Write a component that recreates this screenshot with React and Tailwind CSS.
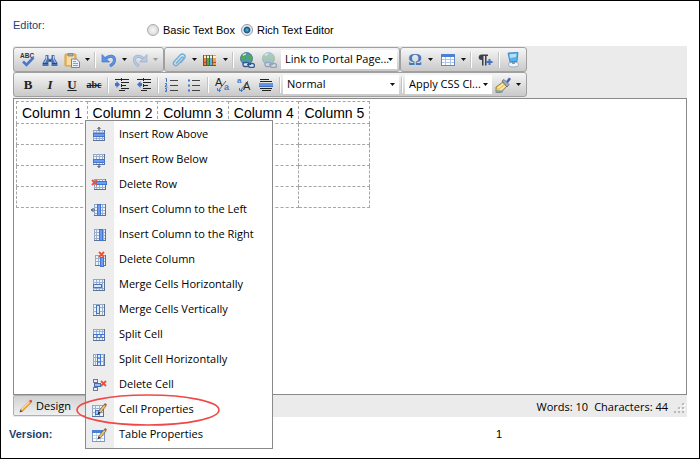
import React from "react";

const CELLS = ["Column 1", "Column 2", "Column 3", "Column 4", "Column 5"];

function Svg({ children, className = "" }) {
  return (
    <svg viewBox="0 0 16 16" className={"h-4 w-4 shrink-0 " + className} aria-hidden="true">
      {children}
    </svg>
  );
}

/* ---------- toolbar icons ---------- */

const SpellIcon = () => (
  <Svg className="overflow-visible">
    <text x="0" y="5.500" fontSize="6.500" fontWeight="bold" fontFamily="Liberation Sans, sans-serif" fill="#333">ABC</text>
    <path d="M3 9.500 6.500 13 13.500 5.500" fill="none" stroke="#4a76d0" strokeWidth="2.600" />
  </Svg>
);

const FindIcon = () => (
  <Svg>
    <path d="M3.500 3h3v3l1 1h1l1-1V3h3v3l3 5v3H9.500v-4h-3v4H.5v-3l3-5z" fill="#4a72b4" />
    <path d="M4.500 4v3l-2 4M11.500 4v3l2 4" fill="none" stroke="#b8cff0" strokeWidth="1" />
    <path d="M1 11.500h5M10 11.500h5M7 8.500h2" stroke="#26498a" />
  </Svg>
);

const PasteIcon = () => (
  <Svg>
    <rect x="1" y="2" width="11" height="12" rx="1" fill="#eebd62" stroke="#cf9c48" />
    <rect x="3" y="4" width="7" height="9" fill="#f9dd9d" />
    <path d="M4 1.500h5v2.500H4z" fill="#a4a9b3" stroke="#737a88" strokeWidth=".7" />
    <path d="M7.500 7h5l3 3v5.500h-8z" fill="#e9f0fb" stroke="#5f7aa5" strokeWidth=".9" />
    <path d="M9 9.500h3M9 11.500h5M9 13.500h5" stroke="#7da0d4" />
  </Svg>
);

const Undo = ({ color, dark }) => (
  <>
    <path d="M4.500 6.500C9 2.500 13.500 4 13.500 8c0 2.500-2 4.500-4.500 6" fill="none" stroke={dark} strokeWidth="3" />
    <path d="M4.500 6.500C9 2.500 13.500 4 13.500 8c0 2.500-2 4.500-4.500 6" fill="none" stroke={color} strokeWidth="1.800" />
    <path d="M1 2.500v7.500h7.500z" fill={color} stroke={dark} strokeWidth=".7" />
  </>
);

const UndoIcon = () => <Svg><Undo color="#5b93e4" dark="#4576c6" /></Svg>;
const RedoIcon = () => (
  <Svg><g transform="translate(16 0) scale(-1 1)"><Undo color="#b5c9e4" dark="#98aecd" /></g></Svg>
);

const ClipIcon = () => (
  <Svg>
    <path d="M5 11.500 10.500 5.500c1.200-1.300 2.800.2 1.700 1.500L6.500 13c-2 2-5.500-.8-3.500-3.200L9.200 3c2.600-2.600 6.400.6 4.300 3.300L9.500 11" fill="none" stroke="#6fb1dc" strokeWidth="1.400" />
  </Svg>
);

const LibraryIcon = () => (
  <Svg>
    <g shapeRendering="crispEdges">
      <rect x="1" y="3" width="13" height="11" fill="#6a5640" />
      <rect x="2" y="3" width="2" height="10" fill="#e8842c" />
      <rect x="5" y="3" width="2" height="10" fill="#58a845" />
      <rect x="8" y="3" width="2" height="10" fill="#5fb2e4" />
      <rect x="11" y="3" width="3" height="10" fill="#efa632" />
      <path d="M2 5h2M5 5h2M8 5h2M11 5h3" stroke="#fff2bb" strokeWidth="2" />
      <path d="M2 10.500h2M11 10.500h3" stroke="#c0452a" />
    </g>
  </Svg>
);

const GlobeLinkIcon = ({ faded = false }) => (
  <Svg className={faded ? "opacity-40" : ""}>
    <circle cx="7.500" cy="6.500" r="6" fill="#4b97c2" stroke="#376a86" strokeWidth=".8" />
    <path d="M3 3c2-2.500 5-2 5-1L6.500 4 8 6 5 9 2 7zM9.500 4 12 2.500l1.500 4L11 9 9 7z" fill="#52a853" />
    <path d="M4 3.500c1-1.500 3-1.500 3-1.500" stroke="#d4f3df" strokeWidth="1.400" fill="none" />
    <rect x="4" y="10.500" width="6" height="4" rx="2" fill="#dce7f7" stroke="#35598f" strokeWidth="1.300" />
    <rect x="9.500" y="11.500" width="6" height="4" rx="2" fill="#dce7f7" stroke="#35598f" strokeWidth="1.300" />
    <path d="M8 12.500h4" stroke="#35598f" strokeWidth="1.200" />
  </Svg>
);

const OmegaIcon = () => (
  <span className="font-['Liberation_Serif',serif] text-[17px] leading-4 font-bold text-[#4a74b8]">Ω</span>
);

const TableIcon = () => (
  <Svg>
    <rect x="1.500" y="2.500" width="13" height="11" fill="#fff" stroke="#6288c4" />
    <rect x="1" y="2" width="14" height="3" fill="#4a80d6" />
    <path d="M2 7.500h12M2 10.500h12M5.500 5v8M10.500 5v8" stroke="#adc6ea" />
  </Svg>
);

const ParagraphIcon = () => (
  <Svg>
    <path d="M7 2.500H4.500C1 2.500.5 8 4.500 8H5v5.500h1.500V4H8v9.500h1.500V4H11V2.500z" fill="#3c4048" />
    <path d="M12.500 7v6M9.500 10h6" stroke="#3e70cc" strokeWidth="2" />
  </Svg>
);

const ModuleIcon = () => (
  <Svg>
    <ellipse cx="8.500" cy="12.500" rx="5" ry="2.500" fill="#f1f4f8" stroke="#9fabbb" />
    <path d="M7 9h3v3H7z" fill="#8d9fb5" />
    <path d="m3 1 10-.5-1 9-7 .5z" fill="#54b3ee" stroke="#2d7bb9" strokeWidth=".8" />
    <path d="m4.500 2.200 7-.4-.5 3.200-6 1z" fill="#b4e2fb" />
  </Svg>
);

const Letter = ({ children, className = "" }) => (
  <span className={"font-['Liberation_Serif',serif] leading-4 font-bold text-[#222] " + className}>{children}</span>
);

const DentIcon = ({ out = false }) => (
  <Svg>
    <path d="M1 2.500h14M7 5.500h8M7 8.500h5M7 11.500h8M5 13.500h6" stroke="#222" />
    <path d={out ? "M1 7.500 4.500 4v2H6v3H4.500v2z" : "M6 7.500 2.500 4v2H1v3h1.500v2z"} fill="#3f73cf" />
    <path d="M7.500 1v14" stroke="#222" strokeDasharray="1 1" />
  </Svg>
);

const OrderedIcon = () => (
  <Svg>
    <path d="M6 3.500h8M6 8.500h8M6 13.500h8" stroke="#444" />
    <path d="M1.500 1.500h1V5M1 6.500h1.500v2H1.500v1.500H3.500M1 11.500h1.500v2H1.500M2.500 13v1.500H1" fill="none" stroke="#3f73cf" />
  </Svg>
);

const BulletIcon = () => (
  <Svg>
    <path d="M6 3.500h8M6 8.500h8M6 13.500h8" stroke="#444" />
    <path d="M2 3.500h2M2 8.500h2M2 13.500h2" stroke="#3f73cf" strokeWidth="2" />
  </Svg>
);

const CaseIcon = ({ up = false }) => (
  <Svg>
    <text x={up ? 1 : 1} y={up ? 6 : 9} fontSize={up ? 8 : 11} fontFamily="Liberation Sans, sans-serif" fontWeight={up ? "bold" : "normal"} fill={up ? "#4778cf" : "#222"}>{up ? "a" : "A"}</text>
    <text x={up ? 7 : 10} y="13" fontSize={up ? 11 : 9} fontFamily="Liberation Sans, sans-serif" fontWeight={up ? "normal" : "bold"} fill={up ? "#222" : "#4778cf"}>{up ? "A" : "a"}</text>
    <path d="M5 13 12 4" stroke="#555" strokeWidth=".9" />
    <path d="M3.500 11v2.500h3M5 12l1.500 1.500L5 15" fill="none" stroke="#4778cf" />
  </Svg>
);

const RuleIcon = () => (
  <Svg>
    <path d="M2 2.500h9M2 4.500h12M2 11.500h12M4 13.500h9" stroke="#222" />
    <rect x="1" y="6" width="14" height="4" fill="#6294e4" />
    <path d="M1 9.500h14" stroke="#3f6fc4" />
  </Svg>
);

const BrushIcon = () => (
  <Svg>
    <path d="m1 10 7-5 4 4-6 6.500H1z" fill="#f0c95c" stroke="#82713f" strokeWidth=".8" />
    <path d="m3 11 5-4M5 13l5-4" stroke="#fff1b5" strokeWidth="1.300" />
    <path d="M1 14.500h7" stroke="#6f9fd4" strokeWidth="2" />
    <path d="m7 4 2-1.500 5 5L12 10z" fill="#a5adba" stroke="#5b6472" strokeWidth=".8" />
    <path d="m11 4.500 3-4 2 1.500-3 4z" fill="#4361be" />
  </Svg>
);

const PencilIcon = () => (
  <Svg>
    <path d="m2.500 11.500 8.500-8.500 2 2-8.500 8.500z" fill="#f0a83c" stroke="#d08a35" strokeWidth=".6" />
    <path d="m3.500 11.500 8-8" stroke="#ffe29a" strokeWidth="1.100" />
    <path d="m11 3 1-1c1-.8 2.800 1 2 2l-1 1z" fill="#d25356" />
    <path d="m2.500 11.500 2 2L1.500 14.500z" fill="#5b4a3a" />
  </Svg>
);

/* ---------- menu icons ---------- */

const Grid = ({ x = 2, y = 2, w = 12, h = 11, xs = [5.5, 8.5, 11.5], ys = [5.5, 8.5] }) => (
  <g shapeRendering="crispEdges">
    <rect x={x + 0.5} y={y + 0.5} width={w - 1} height={h - 1} fill="#edf3fb" stroke="#8fa5c5" />
    {xs.map((v) => <path key={"x" + v} d={`M${v} ${y}v${h}`} stroke="#9bb0ce" />)}
    {ys.map((v) => <path key={"y" + v} d={`M${x} ${v}h${w}`} stroke="#9bb0ce" />)}
    <path d={`M${x} ${y + h - 0.5}h${w}M${x + w - 0.5} ${y}v${h}`} stroke="#5b7298" />
  </g>
);

const Bar = ({ x, y, w, h }) => (
  <>
    <rect x={x} y={y} width={w} height={h} fill="#4474d2" />
    <rect x={x + 1} y={y + 1} width={w - 2} height={h - 2} fill="#6f9bee" />
  </>
);

const Cross = ({ x, y }) => (
  <path d={`M${x} ${y}l5 5M${x + 5} ${y}l-5 5`} stroke="#ee5036" strokeWidth="1.800" />
);

const Pen = () => (
  <>
    <path d="m7.500 9.500 5.500-7 2 1.500L9.500 11z" fill="#e4c578" stroke="#6e5b3a" strokeWidth=".7" />
    <path d="M13 2.500 14 1l2 1.500-1 1.500z" fill="#9b5c52" />
    <path d="m7.500 9.500 2 1.500-3 1.500z" fill="#222" />
  </>
);

const MENU = [
  ["Insert Row Above", <><Grid y={3} h={11} ys={[5.5, 11.500]} /><Bar x={2} y={6} w={12} h={4} /><path d="M8 0v4M6.500 2 8 .5 9.500 2" stroke="#3f4e68" fill="none" /></>],
  ["Insert Row Below", <><Grid y={2} h={11} ys={[4.500]} /><Bar x={2} y={7} w={12} h={4} /><path d="M8 12v3.500M6.500 14l1.500 1.500L9.500 14" stroke="#3f4e68" fill="none" /></>],
  ["Delete Row", <><Grid x={3} y={2} h={11} ys={[4.500, 10.500]} /><Bar x={5} y={4} w={11} h={4} /><Cross x={1} y={3} /></>],
  ["Insert Column to the Left", <><Grid x={3} y={2} w={12} h={12} xs={[11.500]} ys={[5.500, 8.500, 11.500]} /><Bar x={6} y={2} w={4} h={12} /><path d="M0 8h4M2.500 6l-2 2 2 2" stroke="#3f4e68" fill="none" /></>],
  ["Insert Column to the Right", <><Grid x={3} y={2} w={12} h={12} xs={[5.500, 12.500]} ys={[5.500, 8.500, 11.500]} /><Bar x={8} y={2} w={4} h={12} /></>],
  ["Delete Column", <><Grid x={4} y={3} w={11} h={11} xs={[7.500]} ys={[6.500, 9.500]} /><Bar x={9} y={5} w={4} h={10} /><Cross x={8} y={0} /></>],
  ["Merge Cells Horizontally", <><Grid h={12} ys={[5.500, 11.500]} /><rect x="2.500" y="7.500" width="8" height="3" fill="#dbe7fa" stroke="#4674c4" /></>],
  ["Merge Cells Vertically", <><Grid h={12} ys={[5.500, 9.500]} /><rect x="5.500" y="3.500" width="3" height="8" fill="#dbe7fa" stroke="#4674c4" /></>],
  ["Split Cell", <><Grid h={12} ys={[4.500]} /><Bar x={2} y={7} w={12} h={4} /><path d="M3 9h10" stroke="#e6effd" strokeWidth="2" strokeDasharray="2 2" /></>],
  ["Split Cell Horizontally", <><Grid h={12} xs={[4.500, 12.500]} ys={[5.500, 9.500]} /><Bar x={6} y={2} w={4} h={12} /><path d="M8 3v10" stroke="#e6effd" strokeWidth="2" strokeDasharray="2 2" /></>],
  ["Delete Cell", <><rect x="2.500" y="2.500" width="4" height="3" fill="#e8eff9" stroke="#66799a" /><rect x="3.500" y="6.500" width="6" height="3" fill="#9fbdec" stroke="#466caf" /><rect x="2.500" y="10.500" width="4" height="3" fill="#e8eff9" stroke="#66799a" /><Cross x={10} y={4} /></>],
  ["Cell Properties", <><Grid x={1} y={3} w={12} h={12} xs={[4.500, 8.500]} ys={[6.500, 10.500]} /><rect x="4.500" y="8.500" width="4" height="4" fill="#b2caf3" stroke="#4674c4" /><Pen /></>],
  ["Table Properties", <><rect x="1.500" y="3.500" width="12" height="11" fill="#fff" stroke="#7c98c5" /><path d="M1 4.500h13" stroke="#4a80d6" strokeWidth="3" /><path d="M2 8.500h11M2 11.500h11M5.500 6v8M9.500 6v8" stroke="#c3d4ec" /><Pen /></>],
];

/* ---------- toolbar parts ---------- */

function Caret({ faded = false }) {
  return (
    <svg viewBox="0 0 5 3" className="h-[3px] w-[5px]" aria-hidden="true">
      <path d="M0 0h5L2.500 3z" fill={faded ? "#999" : "#111"} />
    </svg>
  );
}

function Tool({ label, children, className = "" }) {
  return (
    <button type="button" aria-label={label} className={"flex h-full w-[22px] shrink-0 items-center justify-center " + className}>
      {children}
    </button>
  );
}

function Drop({ label, faded }) {
  return (
    <button type="button" aria-label={label} className="flex h-full w-[9px] shrink-0 items-center justify-center">
      <Caret faded={faded} />
    </button>
  );
}

const Sep = () => (
  <span className="mx-[2px] h-4 w-[2px] shrink-0 border-r border-l border-r-white border-l-[#c4c4c4]" />
);

function Group({ children, className = "" }) {
  return (
    <div className={"flex h-[25px] items-center rounded-[3px] border border-[#a0a0a0] bg-linear-to-b from-[#f6f6f6] to-[#c9c9c9] " + className}>
      {children}
    </div>
  );
}

function Picker({ label, value, className }) {
  return (
    <div className={"relative h-[19px] shrink-0 " + className}>
      <select aria-label={label} className="h-full w-full appearance-none bg-white pr-2 pl-1 font-['Open_Sans','Noto_Sans',sans-serif] text-[11px] text-black outline-none">
        <option>{value}</option>
      </select>
      <span className="pointer-events-none absolute inset-y-0 right-1 flex items-center"><Caret /></span>
    </div>
  );
}

function Radio({ id, label, checked }) {
  return (
    <div className="flex items-center gap-1">
      <input
        type="radio"
        id={id}
        name="editor-mode"
        defaultChecked={checked}
        className="h-3 w-3 appearance-none rounded-full border border-[#a9a9a9] bg-radial from-[#f6f6f6] to-[#d2d2d2] checked:border-[#8b97a3] checked:from-[#3fa9de] checked:from-10% checked:via-[#1b4f78] checked:via-40% checked:to-[#ececec] checked:to-55%"
      />
      <label htmlFor={id}>{label}</label>
    </div>
  );
}

function ContextMenu() {
  return (
    <ul role="menu" className="absolute top-[21px] left-[71px] w-[188px] border border-[#8a8a8a] bg-white bg-linear-to-r from-[#ededed] from-[28px] to-white to-[28px] py-px font-['Open_Sans','Noto_Sans',sans-serif] text-[11px] text-black">
      {MENU.map(([name, icon]) => (
        <li key={name} role="none" className="relative">
          <button type="button" role="menuitem" className="flex h-[25px] w-full items-center gap-3 pl-[5px] whitespace-nowrap">
            <Svg className="overflow-visible">{icon}</Svg>
            {name}
          </button>
          {name === "Cell Properties" && (
            <svg viewBox="0 0 144 32" className="pointer-events-none absolute -top-[3px] -left-[10px] h-8 w-36" aria-hidden="true">
              <ellipse cx="72" cy="16" rx="71" ry="15" fill="none" stroke="#f04848" strokeWidth="1.600" />
            </svg>
          )}
        </li>
      ))}
    </ul>
  );
}

export default function App() {
  return (
    <div className="flex min-h-screen flex-col border border-black bg-white px-3 font-['Liberation_Sans',Arial,sans-serif] text-[11px] text-black">
      <header className="flex h-[45px] items-start">
        <div className="w-[134px] pt-4 leading-4 text-[#1c3f73]">Editor:</div>
        <fieldset className="flex gap-[6px] pt-[21px] leading-4">
          <Radio id="basic" label="Basic Text Box" />
          <Radio id="rich" label="Rich Text Editor" checked />
        </fieldset>
      </header>

      <main className="flex flex-1 flex-col bg-[#ebebeb]">
        <div className="w-[514px] py-px">
          <div className="flex">
            <Group className="w-[151px] pl-[3px]">
              <Tool label="Spell check"><SpellIcon /></Tool>
              <Tool label="Find"><FindIcon /></Tool>
              <Tool label="Paste"><PasteIcon /></Tool>
              <Drop label="Paste options" />
              <Sep />
              <Tool label="Undo"><UndoIcon /></Tool>
              <Drop label="Undo history" />
              <Tool label="Redo"><RedoIcon /></Tool>
              <Drop label="Redo history" faded />
            </Group>
            <Group className="flex-1 pl-[3px]">
              <Tool label="Attach"><ClipIcon /></Tool>
              <Drop label="Attach options" />
              <Tool label="Library"><LibraryIcon /></Tool>
              <Drop label="Library options" />
              <Sep />
              <Tool label="Insert link"><GlobeLinkIcon /></Tool>
              <Tool label="Remove link"><GlobeLinkIcon faded /></Tool>
              <Picker label="Portal link" value="Link to Portal Page..." className="ml-px w-[116px]" />
            </Group>
            <Group className="w-[127px] pl-[3px]">
              <Tool label="Symbol"><OmegaIcon /></Tool>
              <Drop label="Symbol options" />
              <Tool label="Insert table" className="ml-[2px]"><TableIcon /></Tool>
              <Drop label="Table options" />
              <Sep />
              <Tool label="Paragraph"><ParagraphIcon /></Tool>
              <Sep />
              <Tool label="Modules"><ModuleIcon /></Tool>
            </Group>
          </div>
          <Group className="pl-[3px]">
            <Tool label="Bold"><Letter className="text-[13px]">B</Letter></Tool>
            <Tool label="Italic"><Letter className="text-[13px] italic">I</Letter></Tool>
            <Tool label="Underline"><Letter className="text-[13px] underline">U</Letter></Tool>
            <Tool label="Strikethrough"><Letter className="text-[10px] line-through">abc</Letter></Tool>
            <Sep />
            <Tool label="Indent"><DentIcon /></Tool>
            <Tool label="Outdent"><DentIcon out /></Tool>
            <Sep />
            <Tool label="Numbered list"><OrderedIcon /></Tool>
            <Tool label="Bulleted list"><BulletIcon /></Tool>
            <Sep />
            <Tool label="Lower case"><CaseIcon /></Tool>
            <Tool label="Upper case"><CaseIcon up /></Tool>
            <Tool label="Horizontal rule"><RuleIcon /></Tool>
            <Sep />
            <Picker label="Paragraph style" value="Normal" className="w-[116px]" />
            <Sep />
            <Picker label="CSS class" value="Apply CSS Cl..." className="w-[87px]" />
            <Tool label="Format stripper"><BrushIcon /></Tool>
            <Drop label="Format stripper options" />
          </Group>
        </div>

        <section className="relative flex-1 border border-[#8a8a8a] bg-white p-[2px]">
          <table className="w-[354px] table-fixed border-collapse text-[14px] leading-4">
            <tbody>
              <tr className="h-[22px]">
                {CELLS.map((c) => (
                  <td key={c} className="border border-dashed border-[#a6a6a6] pl-[5px] whitespace-nowrap">{c}</td>
                ))}
              </tr>
              {[1, 2, 3, 4].map((r) => (
                <tr key={r} className="h-[21px]">
                  {CELLS.map((c) => <td key={c} className="border border-dashed border-[#a6a6a6]" />)}
                </tr>
              ))}
            </tbody>
          </table>
          <ContextMenu />
        </section>

        <footer className="flex h-[22px] items-start justify-between font-['Open_Sans','Noto_Sans',sans-serif] leading-4">
          <button type="button" className="flex h-[21px] w-[74px] items-center gap-[2px] rounded-[2px] border border-[#b0b0b0] bg-linear-to-b from-[#d2d2d2] to-[#efefef] pl-1">
            <PencilIcon />
            Design
          </button>
          <div className="flex items-center gap-[6px] pt-1">
            <span>Words: 10</span>
            <span>Characters: 44</span>
            <svg viewBox="0 0 11 11" className="mr-[2px] h-[11px] w-[11px]" aria-hidden="true">
              <path d="M8 1h2v2H8zM4 5h2v2H4zM8 5h2v2H8zM0 9h2v2H0zM4 9h2v2H4zM8 9h2v2H8z" fill="#b9b9b9" />
              <path d="M10 2h1v2H9V3h1zM6 6h1v2H5V7h1zM10 6h1v2H9V7h1z" fill="#fff" />
            </svg>
          </div>
        </footer>
      </main>

      <div className="-ml-1 flex h-[41px] items-start pt-[9px] leading-4">
        <div className="w-[487px] font-bold text-[#1c3f73]">Version:</div>
        <div>1</div>
      </div>
    </div>
  );
}
